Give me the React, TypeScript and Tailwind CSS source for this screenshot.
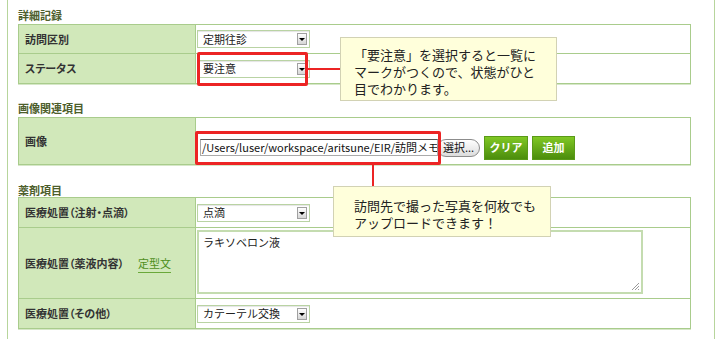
import React from "react";

const jp = "font-['Lucida_Grande','Noto_Sans_CJK_JP',sans-serif]";

function Select({ value }: { value: string }) {
  return (
    <div className="flex h-[18px] w-[113px] items-center justify-between border border-[#b9d3a3] bg-white pl-[5px] pr-[2px] shadow-[inset_0_1px_1px_#e4e4e4]">
      <span className="text-[11px] leading-none text-[#222]">{value}</span>
      <span className="flex h-[12px] w-[10px] items-end justify-center border border-[#a0a0a0] bg-gradient-to-b from-white to-[#d6d6d6] pb-[3px]">
        <span className="border-x-[3px] border-t-[3px] border-x-transparent border-t-black" />
      </span>
    </div>
  );
}

function Label({ children }: { children: React.ReactNode }) {
  return (
    <div className="flex items-center border-r border-[#a9cc8c] bg-[#d1e8ba] pl-[6px] text-[11px] font-bold text-[#333] [font-feature-settings:'palt']">
      {children}
    </div>
  );
}

function Heading({ children, className }: { children: React.ReactNode; className: string }) {
  return (
    <div className={`h-[14px] text-[11px] leading-[14px] font-bold text-[#4d5e2c] ${className}`}>
      {children}
    </div>
  );
}

const table = "w-[673px] border border-[#a9cc8c] bg-white shadow-[0_1px_0_#d6e7c8]";
const row = "grid grid-cols-[177px_1fr]";

export default function App() {
  return (
    <div className={`relative h-[339px] w-[720px] overflow-hidden bg-white ${jp}`}>
      <div className="ml-[7px] h-[339px] w-[708px] border-x border-[#b7d59c] pl-[10px] pt-[8px]">
        {/* 詳細記録 */}
        <Heading className="mb-[2px]">詳細記録</Heading>
        <div className={table}>
          <div className={`${row} h-[28px]`}>
            <Label>訪問区別</Label>
            <div className="flex items-center pl-[1px]">
              <Select value="定期往診" />
            </div>
          </div>
          <div className={`${row} h-[30px] border-t border-[#a9cc8c]`}>
            <Label>ステータス</Label>
            <div className="flex items-center pl-[1px]">
              <Select value="要注意" />
            </div>
          </div>
        </div>

        {/* 画像関連項目 */}
        <Heading className="mt-[17px] mb-[2px]">画像関連項目</Heading>
        <div className={table}>
          <div className={`${row} h-[46px]`}>
            <Label>画像</Label>
            <div className="flex items-center pl-[4px] pt-[13px]">
              <div className="flex h-[17px] w-[238px] items-center overflow-hidden whitespace-nowrap border border-[#aaa] border-t-[#555] bg-white pl-[1px] text-[11px] leading-none text-[#111]">
                /Users/luser/workspace/aritsune/EIR/訪問メモ
              </div>
              <div className="ml-[-1px] flex h-[18px] w-[43px] items-center justify-center rounded-full border border-[#8c8c8c] bg-gradient-to-b from-white to-[#dcdcdc] text-[11px] leading-none text-[#111]">
                選択...
              </div>
              <div className="ml-[4px] flex h-[24px] w-[44px] items-center justify-center border border-[#5a9a18] bg-gradient-to-b from-[#80c824] to-[#4c8d0c] text-[11px] font-bold text-white">
                クリア
              </div>
              <div className="ml-[4px] flex h-[24px] w-[43px] items-center justify-center border border-[#5a9a18] bg-gradient-to-b from-[#80c824] to-[#4c8d0c] text-[11px] font-bold text-white">
                追加
              </div>
            </div>
          </div>
        </div>

        {/* 薬剤項目 */}
        <Heading className="mt-[18px]">薬剤項目</Heading>
        <div className={table}>
          <div className={`${row} h-[29px]`}>
            <Label>医療処置（注射・点滴）</Label>
            <div className="flex items-center pl-[1px]">
              <Select value="点滴" />
            </div>
          </div>
          <div className={`${row} h-[71px] border-t border-[#a9cc8c]`}>
            <Label>
              医療処置（薬液内容）
              <span className="ml-[14px] font-normal text-[#4f8f1c] underline decoration-[#6aa83a] underline-offset-[4px]">
                定型文
              </span>
            </Label>
            <div className="pl-[1px] pt-[2px]">
              <div className="relative h-[64px] w-[446px] border-2 border-[#c4dcb0] bg-white pl-[4px] pt-[3px] text-[11px] leading-[14px] text-[#222]">
                ラキソベロン液
                <svg className="absolute bottom-[1px] right-[1px]" width="9" height="9" viewBox="0 0 9 9">
                  <path d="M8 1L1 8M8 4L4 8M8 7L7 8" stroke="#9a9a9a" strokeWidth="1" />
                </svg>
              </div>
            </div>
          </div>
          <div className={`${row} h-[30px] border-t border-[#a9cc8c]`}>
            <Label>医療処置（その他）</Label>
            <div className="flex items-center pl-[1px]">
              <Select value="カテーテル交換" />
            </div>
          </div>
        </div>
      </div>

      {/* annotations */}
      <div className="absolute left-[197px] top-[52px] h-[34px] w-[111px] rounded-[2px] border-[3px] border-[#ec2424]" />
      <div className="absolute left-[308px] top-[68px] h-[2px] w-[32px] bg-[#ec2424]" />
      <div className="absolute left-[340px] top-[37px] h-[64px] w-[217px] border border-[#d2d2b4] bg-[#ffffdb] pl-[13px] pt-[8px] text-[13px] leading-[17px] text-[#222]">
        「要注意」を選択すると一覧に
        <br />
        マークがつくので、状態がひと
        <br />
        目でわかります。
      </div>

      <div className="absolute left-[195px] top-[131px] h-[34px] w-[246px] rounded-[2px] border-[3px] border-[#ec2424]" />
      <div className="absolute left-[372px] top-[165px] h-[21px] w-[2px] bg-[#ec2424]" />
      <div className="absolute left-[333px] top-[186px] h-[51px] w-[218px] border border-[#d2d2b4] bg-[#ffffdb] pl-[20px] pt-[10px] text-[13px] leading-[17px] text-[#222]">
        訪問先で撮った写真を何枚でも
        <br />
        アップロードできます！
      </div>
    </div>
  );
}
